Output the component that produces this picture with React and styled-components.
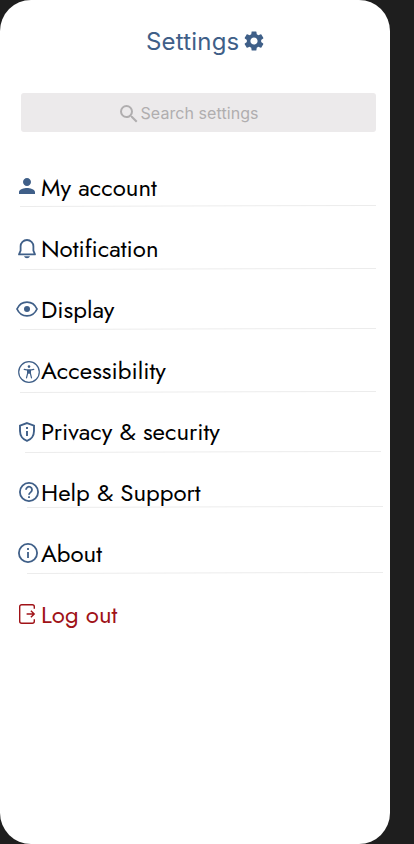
import React from "react";
import styled, { createGlobalStyle } from "styled-components";
import { MdPerson, MdSettings, MdSearch } from "react-icons/md";

const GlobalStyle = createGlobalStyle`
  * { box-sizing: border-box; }
  body { margin: 0; background: #1e1e1e; }
`;

const Screen = styled.main`
  width: 390px;
  height: 844px;
  border-radius: 31px;
  background: #fff;
  overflow: hidden;
`;

const Header = styled.header`
  display: flex;
  align-items: center;
  height: 82px;
  padding-left: 146px;
  color: #3f5f88;
  svg { flex: none; margin-left: 2px; }
`;

const Title = styled.h1`
  width: 94px;
  margin: 2px 0 0;
  font: 400 24px/30px Inter, sans-serif;
  letter-spacing: 0.2px;
  white-space: nowrap;
`;

const SearchBar = styled.label`
  display: flex;
  align-items: center;
  width: 355px;
  height: 39px;
  margin: 11px 0 0 21px;
  padding: 2px 0 0 96px;
  border-radius: 3px;
  background: #eceaeb;
  color: #b0aeaf;
  svg { flex: none; }
`;

const SearchText = styled.span`
  font: 400 16px/20px Inter, sans-serif;
  letter-spacing: 0.07px;
  white-space: nowrap;
  margin: -2px 0 0 -0.5px;
`;

const List = styled.nav`
  display: grid;
  grid-auto-rows: 61px;
  margin-top: 37px;
`;

const Item = styled.div`
  color: ${(p) => (p.$danger ? "#a01217" : "#000")};
`;

const ItemContent = styled.div`
  display: flex;
  height: 33px;
`;

const IconSlot = styled.span`
  flex: none;
  width: 26px;
  height: 24px;
  margin: ${(p) => p.$top}px ${(p) => 15 - p.$left}px 0 ${(p) => p.$left}px;
  color: ${(p) => (p.$danger ? "#a01217" : "#3f5f88")};
  svg { display: block; }
`;

const Label = styled.span`
  font: 400 24px/38px Jost, Lato, sans-serif;
  white-space: nowrap;
`;

const Divider = styled.div`
  width: 356px;
  height: 1px;
  margin: ${(p) => p.$top}px 0 0 ${(p) => p.$left}px;
  background: #ececec;
  transform: translateY(-0.5px) rotate(-0.16deg);
`;

const Icon = ({ children, ...rest }) => (
  <svg width="24" height="24" viewBox="0 0 24 24" fill="none" stroke="currentColor" {...rest}>
    {children}
  </svg>
);

const Bell = () => (
  <Icon strokeWidth="1.8" strokeLinejoin="round">
    <path d="M12 3c3.6 0 6.4 2.8 6.4 6.3v4.4l1.6 3.7H4l1.6-3.7V9.3C5.6 5.8 8.4 3 12 3Z" />
    <path d="M9 19.3h6c-.5 1.2-1.6 1.9-3 1.9s-2.5-.7-3-1.9Z" fill="currentColor" stroke="none" />
  </Icon>
);

const Eye = () => (
  <Icon strokeWidth="1.8">
    <path d="M2 12C4 7.6 7.7 5.1 12 5.1S20 7.6 22 12c-2 4.4-5.7 6.9-10 6.9S4 16.4 2 12Z" />
    <circle cx="12" cy="12" r="3" fill="currentColor" stroke="none" />
  </Icon>
);

const Accessibility = () => (
  <Icon strokeWidth="1.2" strokeLinecap="round" strokeLinejoin="round">
    <circle cx="12" cy="12" r="10.3" />
    <circle cx="12" cy="6.6" r="1.3" fill="currentColor" stroke="none" />
    <path d="M7.2 9.3c3.1.8 6.5.8 9.6 0M10.6 10v3.5L9.5 17.9M13.4 10v3.5l1.1 4.4" />
    <path d="M10.5 10h3v3.7h-3Z" fill="currentColor" stroke="none" />
  </Icon>
);

const Shield = () => (
  <Icon strokeWidth="1.9">
    <path d="m12 3.1 7 2.6v5.4c0 4.6-2.9 8.5-7 9.8-4.1-1.3-7-5.2-7-9.8V5.7l7-2.6Z" />
    <path d="M12 11v5M12 7v2" />
  </Icon>
);

const Help = () => (
  <Icon strokeWidth="1.8">
    <circle cx="12" cy="12" r="9.1" />
    <path d="M9 9.7a3 3 0 1 1 4.8 2.4c-1.1.8-1.8 1.3-1.8 2.7M12 16.2v1.8" />
  </Icon>
);

const Info = () => (
  <Icon strokeWidth="1.8">
    <circle cx="12" cy="12" r="9.1" />
    <path d="M12 11v6M12 7v2" />
  </Icon>
);

const Logout = () => (
  <Icon strokeWidth="1.4">
    <path d="M19.3 6.7v-2a2 2 0 0 0-2-2H6.7a2 2 0 0 0-2 2v14.6a2 2 0 0 0 2 2h10.6a2 2 0 0 0 2-2v-2M11.6 12h7.6M15.9 8.7l3.3 3.3-3.3 3.3" />
  </Icon>
);

const items = [
  { label: "My account", icon: <MdPerson size={24} />, x: 15, y: 5, line: [20, 4] },
  { label: "Notification", icon: <Bell />, x: 15, y: 7, line: [20, 6] },
  { label: "Display", icon: <Eye />, x: 15, y: 6, line: [20, 5] },
  { label: "Accessibility", icon: <Accessibility />, x: 17, y: 8, line: [20, 7] },
  { label: "Privacy & security", icon: <Shield />, x: 15, y: 7, line: [25, 6] },
  { label: "Help & Support", icon: <Help />, x: 17, y: 6, line: [27, 0] },
  { label: "About", icon: <Info />, x: 16, y: 6, line: [27, 5] },
  { label: "Log out", icon: <Logout />, x: 15, y: 6, danger: true },
];

export default function App() {
  return (
    <>
      <GlobalStyle />
      <Screen>
        <Header>
          <Title>Settings</Title>
          <MdSettings size={24} />
        </Header>
        <SearchBar>
          <MdSearch size={24} />
          <SearchText>Search settings</SearchText>
        </SearchBar>
        <List>
          {items.map((item) => (
            <Item key={item.label} $danger={item.danger}>
              <ItemContent>
                <IconSlot $left={item.x} $top={item.y} $danger={item.danger}>{item.icon}</IconSlot>
                <Label>{item.label}</Label>
              </ItemContent>
              {item.line && <Divider $left={item.line[0]} $top={item.line[1]} />}
            </Item>
          ))}
        </List>
      </Screen>
    </>
  );
}
